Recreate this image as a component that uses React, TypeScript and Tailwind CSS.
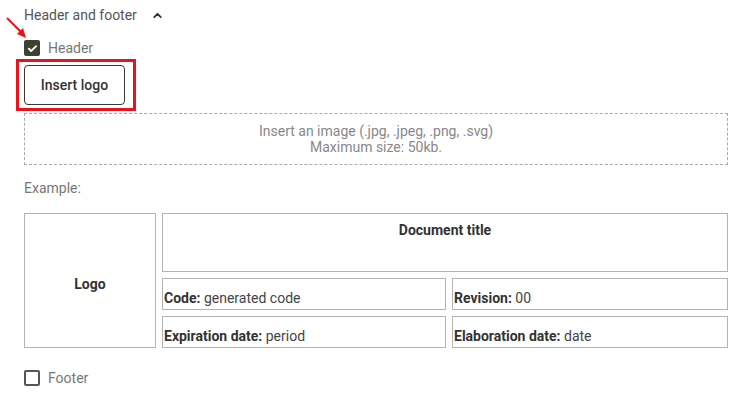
import React from 'react';

export default function App() {
    const font = { fontFamily: 'Roboto, "Liberation Sans", sans-serif' };

    return (
        <div className="relative h-[402px] w-[748px] bg-white text-sm" style={font}>
            {/* red arrow pointing to the header checkbox */}
            <svg className="absolute left-0 top-0" width="40" height="45" viewBox="0 0 40 45">
                <line x1="7" y1="18" x2="22" y2="33" stroke="#e8141c" strokeWidth="2" />
                <polygon points="26,38 17,34 23,28" fill="#e8141c" />
            </svg>

            <div className="flex flex-col px-6 pt-[5px]">
                <div className="flex h-5 items-center gap-[14px] text-[#555]">
                    <span className="text-[14px]">Header and footer</span>
                    <svg width="13" height="13" viewBox="0 0 24 24" fill="none" stroke="#333" strokeWidth="3.5" strokeLinecap="round" strokeLinejoin="round">
                        <path d="M6 15l6-6 6 6" />
                    </svg>
                </div>

                <label className="mt-[13px] flex items-center gap-2">
                    <span className="flex h-4 w-4 items-center justify-center rounded-[2px] bg-[#3c4130]">
                        <svg width="11" height="11" viewBox="0 0 24 24" fill="none" stroke="white" strokeWidth="4" strokeLinecap="round" strokeLinejoin="round">
                            <path d="M4 12.5l5 5L20 7" />
                        </svg>
                    </span>
                    <span className="text-[14px] text-[#777]">Header</span>
                </label>

                <div className="-ml-2 mt-[1px] w-[120px] border-[3px] border-[#e8141c] px-[5px] py-[3px]">
                    <button className="flex h-[40px] w-[101px] items-center justify-center rounded-[4px] border border-[#3a3a2e] text-[14px] font-medium text-[#333]">
                        Insert logo
                    </button>
                </div>

                <div className="mt-[2px] flex h-[52px] w-[704px] flex-col items-center justify-center border border-dashed border-[#aaa] text-[14px] leading-[16px] text-[#888]">
                    <span>Insert an image (.jpg, .jpeg, .png, .svg)</span>
                    <span>Maximum size: 50kb.</span>
                </div>

                <div className="mt-[13px] text-[14px] text-[#777]">Example:</div>

                <div className="mt-[15px] flex w-[704px] gap-[6px] text-[14px] text-[#444]">
                    <div className="flex h-[135px] w-[132px] items-center justify-center border border-[#b3b3b3] pt-[7px] font-bold text-[#333]">
                        Logo
                    </div>
                    <div className="flex flex-1 flex-col gap-[6px]">
                        <div className="flex h-[59px] justify-center border border-[#b3b3b3] pt-[6px] font-bold text-[#333]">
                            Document title
                        </div>
                        <div className="flex gap-[6px]">
                            <div className="flex h-[32px] w-[284px] items-end border border-[#b3b3b3] pb-[1px] pl-px">
                                <span><b className="text-[#333]">Code:</b> generated code</span>
                            </div>
                            <div className="flex h-[32px] flex-1 items-end border border-[#b3b3b3] pb-[1px] pl-px">
                                <span><b className="text-[#333]">Revision:</b> 00</span>
                            </div>
                        </div>
                        <div className="flex gap-[6px]">
                            <div className="flex h-[32px] w-[284px] items-end border border-[#b3b3b3] pb-[1px] pl-px">
                                <span><b className="text-[#333]">Expiration date:</b> period</span>
                            </div>
                            <div className="flex h-[32px] flex-1 items-end border border-[#b3b3b3] pb-[1px] pl-px">
                                <span><b className="text-[#333]">Elaboration date:</b> date</span>
                            </div>
                        </div>
                    </div>
                </div>

                <label className="mt-[20px] flex items-center gap-2">
                    <span className="h-4 w-4 rounded-[2px] border-2 border-[#555]" />
                    <span className="text-[14px] text-[#777]">Footer</span>
                </label>
            </div>
        </div>
    );
}
